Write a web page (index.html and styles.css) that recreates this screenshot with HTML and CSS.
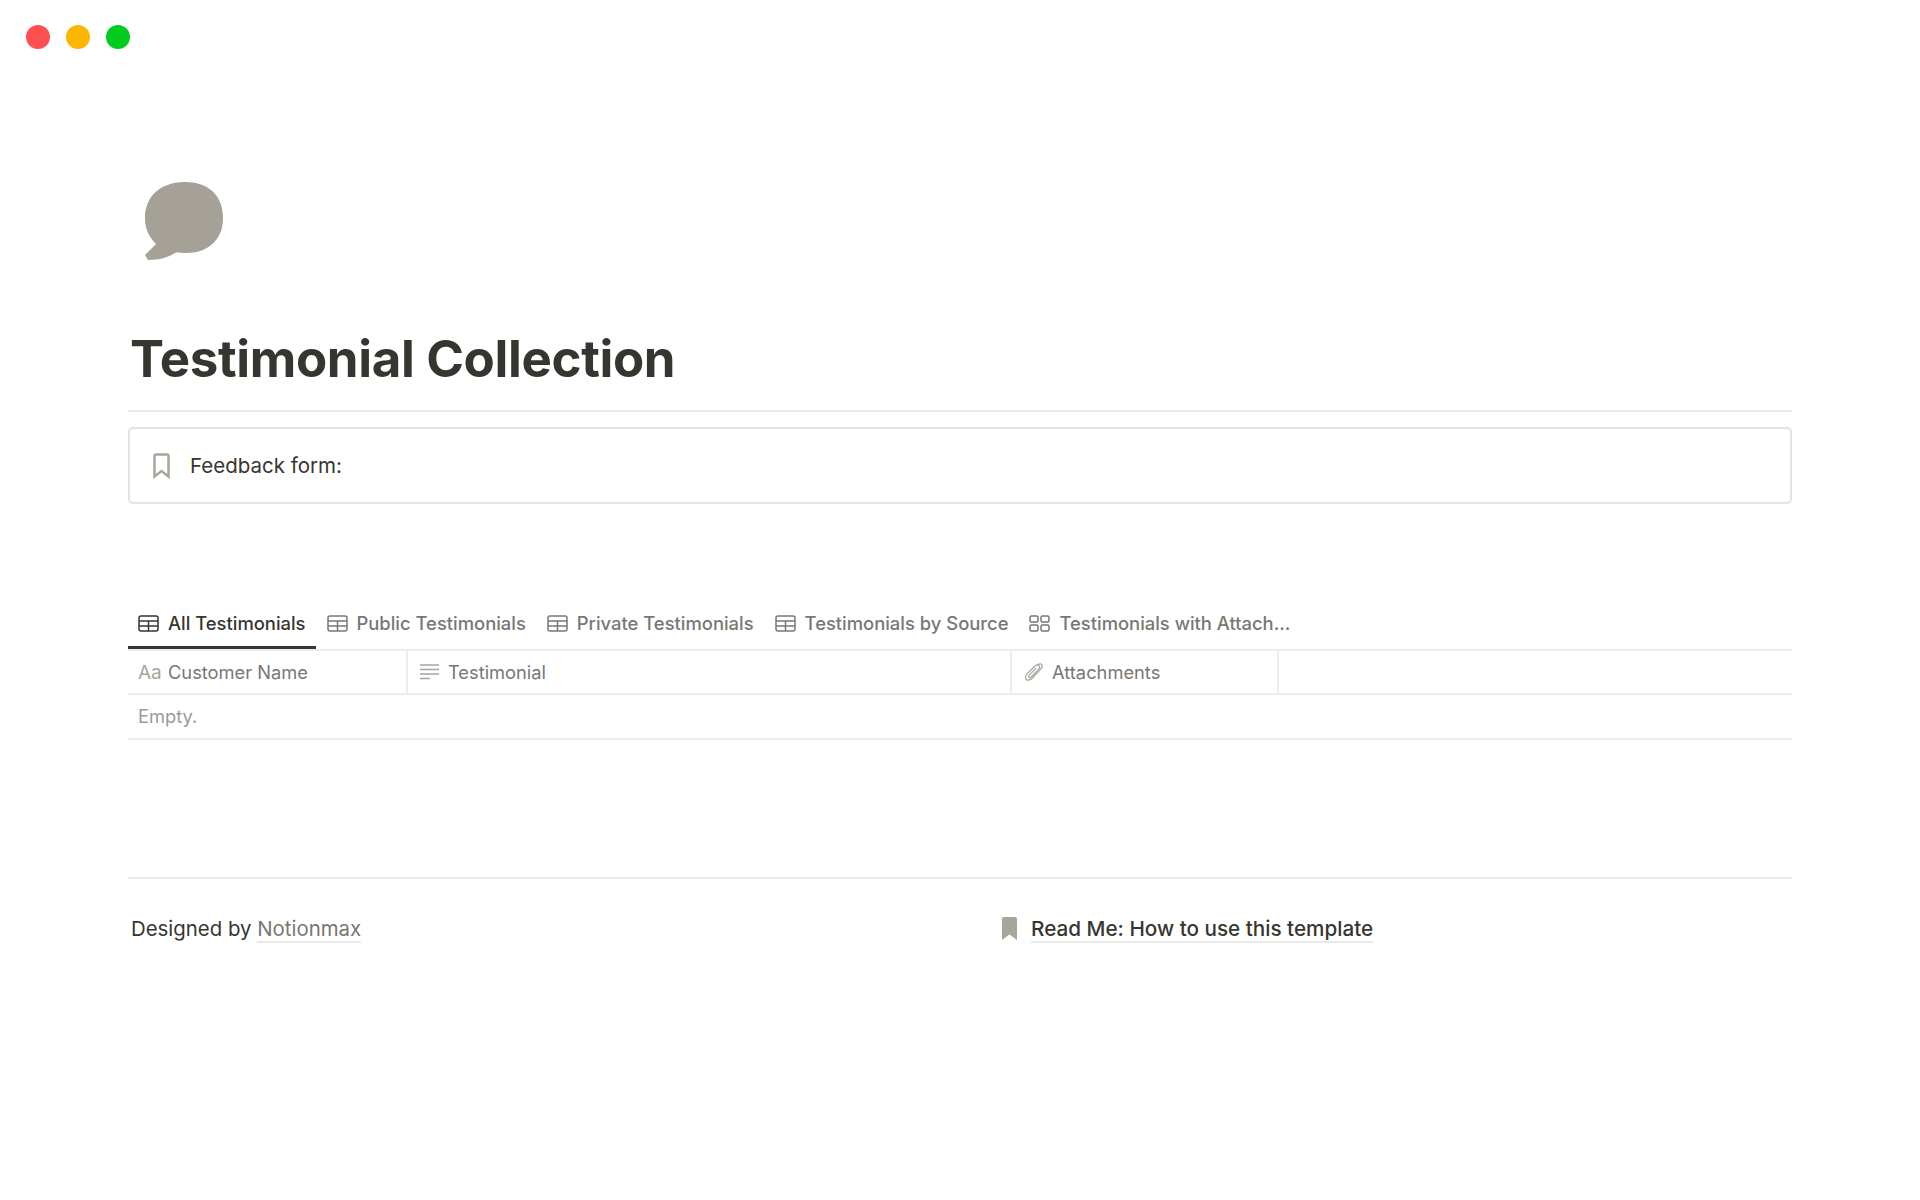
FILE: index.html
```html
<!DOCTYPE html>
<html lang="en">
<head>
  <meta charset="UTF-8">
  <title>Testimonial Collection</title>
  <link rel="stylesheet" href="styles.css">
</head>
<body>
  <div class="window-bar">
    <span class="dot dot-red"></span>
    <span class="dot dot-yellow"></span>
    <span class="dot dot-green"></span>
  </div>

  <div class="page">
    <svg class="page-icon" viewBox="0 0 78 78">
      <path fill="#a5a197" d="M40 0C62 0 78 12 78 36C78 58 63 71 41 71C37 71 34 70.500 31 70.500C25 74 17 78 3 78L0 73L11 62C4 55 0 47 0 36C0 13 17 0 40 0Z"/>
    </svg>

    <h1 class="title">Testimonial Collection</h1>

    <div class="callout">
      <svg class="callout-icon" viewBox="0 0 17 26">
        <path fill="none" stroke="#a8a59c" stroke-width="2.500" d="M1.500 3C1.500 2 2 1.500 3 1.500H14C15 1.500 15.500 2 15.500 3V23.500L8.500 18L1.500 23.500Z"/>
      </svg>
      <span>Feedback form:</span>
    </div>

    <div class="tabs">
      <div class="tab active">
        <svg class="tab-icon" viewBox="0 0 21 17"><use href="#table-icon"/></svg>
        All Testimonials
      </div>
      <div class="tab">
        <svg class="tab-icon" viewBox="0 0 21 17"><use href="#table-icon"/></svg>
        Public Testimonials
      </div>
      <div class="tab">
        <svg class="tab-icon" viewBox="0 0 21 17"><use href="#table-icon"/></svg>
        Private Testimonials
      </div>
      <div class="tab">
        <svg class="tab-icon" viewBox="0 0 21 17"><use href="#table-icon"/></svg>
        Testimonials by Source
      </div>
      <div class="tab">
        <svg class="tab-icon" viewBox="0 0 21 17">
          <g fill="none" stroke="currentColor" stroke-width="1.500">
            <rect x="1" y="1" width="8" height="6" rx="1.500"/>
            <rect x="12" y="1" width="8" height="6" rx="1.500"/>
            <rect x="1" y="10" width="8" height="6" rx="1.500"/>
            <rect x="12" y="10" width="8" height="6" rx="1.500"/>
          </g>
        </svg>
        Testimonials with Attach...
      </div>
    </div>

    <div class="table-head">
      <div class="col col-name"><span class="aa">Aa</span>Customer Name</div>
      <div class="col col-text">
        <svg class="col-icon" viewBox="0 0 20 18">
          <path fill="none" stroke="#a8a59c" stroke-width="1.400" d="M0 2H19M0 6.500H19M0 11H19M0 15.500H10"/>
        </svg>
        Testimonial
      </div>
      <div class="col col-files">
        <svg class="col-icon" viewBox="0 0 20 20">
          <path fill="none" stroke="#a8a59c" stroke-width="1.400" stroke-linecap="round" d="M14.500 1.500C16.500 .3 18.500 1 19 2.500C19.500 4 19 5.200 18 6.300L8.500 16.500C6.300 18.900 3 19.800 1.500 18.300C0 16.800 .5 13.800 2.700 11.600L11.500 3C12.800 1.800 14.500 2 15.500 3C16.500 4 16.500 5.500 15.300 6.800L7 15.500C6 16.500 5 16.500 4.500 16C4 15.500 4 14.500 5 13.500L12 6"/>
        </svg>
        Attachments
      </div>
    </div>
    <div class="table-empty">Empty.</div>

    <div class="footer">
      <div class="footer-col">Designed by <a class="credit">Notionmax</a></div>
      <div class="footer-col footer-link">
        <svg class="link-icon" viewBox="0 0 15 23">
          <path fill="#a8a59c" d="M0 2C0 .7 .7 0 2 0H13C14.300 0 15 .7 15 2V23L7.500 17.500L0 23Z"/>
        </svg>
        <a class="read-me">Read Me: How to use this template</a>
      </div>
    </div>
  </div>

  <svg class="defs" width="0" height="0">
    <symbol id="table-icon" viewBox="0 0 21 17">
      <g fill="none" stroke="currentColor" stroke-width="1.500">
        <rect x="1" y="1" width="19" height="15" rx="2"/>
        <path d="M1 6H20M1 11H20M10.500 6V16"/>
      </g>
    </symbol>
  </svg>
</body>
</html>
```

FILE: styles.css
```css
* {
  box-sizing: border-box;
}

body {
  margin: 0;
  min-height: 1200px;
  background: white;
  font-family: Inter, 'Liberation Sans', sans-serif;
  color: #37352f;
}

.window-bar {
  display: flex;
  gap: 16px;
  padding: 25px 0 0 26px;
}

.dot {
  width: 24px;
  height: 24px;
  border-radius: 50%;
}

.dot-red {
  background-color: #ff4f51;
}

.dot-yellow {
  background-color: #ffb600;
}

.dot-green {
  background-color: #00cc1f;
}

.page {
  padding: 133px 128px 0;
}

.page-icon {
  display: block;
  width: 78px;
  height: 78px;
  margin-left: 17px;
}

.title {
  margin: 0;
  padding: 66px 0 18px 2px;
  border-bottom: 2px solid #e9e9e7;
  font-size: 51px;
  line-height: 66px;
  font-weight: 700;
  letter-spacing: -0.35px;
}

.callout {
  display: flex;
  align-items: center;
  height: 77px;
  margin-top: 15px;
  padding-left: 23px;
  border: 2px solid #e4e4e2;
  border-radius: 5px;
  font-size: 20.500px;
}

.callout-icon {
  width: 17px;
  height: 26px;
  margin-right: 20px;
}

.tabs {
  display: flex;
  height: 50px;
  margin-top: 97px;
  border-bottom: 2px solid #ededec;
}

.tab {
  display: flex;
  align-items: center;
  height: 48px;
  padding: 0 10px 4px;
  margin-right: 1px;
  font-size: 18.400px;
  font-weight: 500;
  color: #787774;
}

.tab.active {
  color: #37352f;
  border-bottom: 3px solid #37352f;
  padding-bottom: 1px;
}

.tab-icon {
  width: 21px;
  height: 17px;
  margin-right: 9px;
}

.table-head {
  display: flex;
  height: 44px;
  border-bottom: 2px solid #ededec;
}

.col {
  display: flex;
  align-items: center;
  padding-left: 10px;
  font-size: 18.300px;
  color: #787774;
  border-right: 2px solid #ededec;
}

.col-name {
  width: 280px;
}

.col-text {
  width: 604px;
  padding-left: 12px;
}

.col-files {
  width: 267px;
  padding-left: 12px;
}

.aa {
  width: 30px;
  font-size: 19px;
  color: #a8a59c;
}

.col-icon {
  width: 20px;
  height: 18px;
  margin-right: 8px;
}

.table-empty {
  height: 45px;
  padding-left: 10px;
  border-bottom: 2px solid #ededec;
  font-size: 18.300px;
  line-height: 43px;
  color: #9b9a97;
}

.footer {
  display: flex;
  margin-top: 137px;
  padding-top: 36px;
  border-top: 2px solid #e9e9e7;
  font-size: 20.400px;
}

.footer-col {
  width: 872px;
  padding-left: 3px;
  line-height: 28px;
}

.credit {
  color: #787774;
  border-bottom: 2px solid #e9e9e7;
}

.footer-link {
  display: flex;
  align-items: center;
  height: 28px;
  padding-left: 43px;
  font-size: 20.700px;
  font-weight: 500;
}

.link-icon {
  width: 15px;
  height: 23px;
  margin: -2px 14px 0 0;
}

.read-me {
  line-height: 25px;
  border-bottom: 2px solid #e9e9e7;
}

.defs {
  position: absolute;
}
```
